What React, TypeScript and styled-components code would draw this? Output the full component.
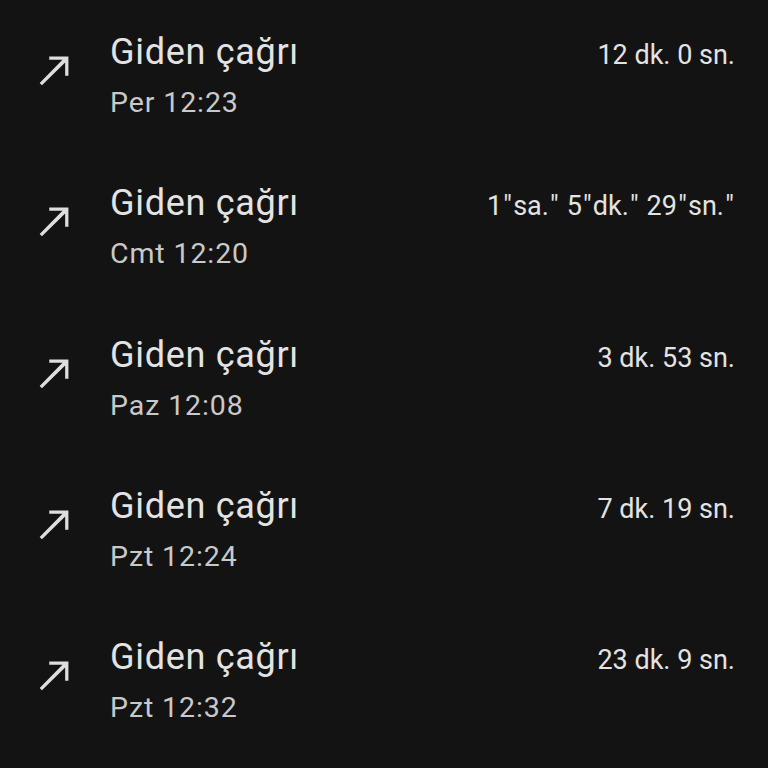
import React from "react";
import styled, { createGlobalStyle } from "styled-components";

const Global = createGlobalStyle`
  html, body { margin: 0; padding: 0; background: #131313; }
  body { font-family: Roboto, "Noto Sans", Arial, sans-serif; }
`;

const List = styled.div`
  width: 768px;
  height: 768px;
  overflow: hidden;
  background: #131313;
  display: flex;
  flex-direction: column;
`;

const Row = styled.div`
  height: 151.25px;
  flex: none;
  display: flex;
  align-items: flex-start;
  box-sizing: border-box;
  padding: 30px 33px 0 0;
`;

const IconCell = styled.div`
  width: 110px;
  flex: none;
  display: flex;
  padding: 17px 0 0 32px;
  box-sizing: border-box;
  svg { display: block; }
`;

const Main = styled.div`
  flex: 1;
  display: flex;
  flex-direction: column;
  min-width: 0;
`;

const TitleLine = styled.div`
  display: flex;
  justify-content: space-between;
  align-items: baseline;
  height: 44px;
`;

const Title = styled.span`
  font-size: 36px;
  line-height: 44px;
  color: #e3e3e3;
  letter-spacing: 0.7px;
`;

const Duration = styled.span`
  font-size: 27px;
  line-height: 44px;
  color: #e3e3e3;
`;

const Quote = styled.span`
  margin: 0 1.2px;
`;

const Sub = styled.div`
  margin-top: 9px;
  font-size: 28.5px;
  line-height: 40px;
  color: #c9c9c9;
  letter-spacing: 0.9px;
`;

const Arrow = () => (
  <svg width="46" height="46" viewBox="0 0 24 24" fill="#dedede">
    <path d="M9 5v1.7h6.9L4 18.8 5.2 20 17.3 8.1V15H19V5z" />
  </svg>
);

const renderDuration = (s: string) =>
  s.split('"').map((part, i, arr) => (
    <React.Fragment key={i}>
      {part}
      {i < arr.length - 1 && <Quote>"</Quote>}
    </React.Fragment>
  ));

const calls = [
  { day: "Per 12:23", dur: "12 dk. 0 sn." },
  { day: "Cmt 12:20", dur: '1"sa." 5"dk." 29"sn."' },
  { day: "Paz 12:08", dur: "3 dk. 53 sn." },
  { day: "Pzt 12:24", dur: "7 dk. 19 sn." },
  { day: "Pzt 12:32", dur: "23 dk. 9 sn." },
];

export default function App() {
  return (
    <>
      <Global />
      <List>
        {calls.map((c, i) => (
          <Row key={i}>
            <IconCell>
              <Arrow />
            </IconCell>
            <Main>
              <TitleLine>
                <Title>Giden çağrı</Title>
                <Duration>{renderDuration(c.dur)}</Duration>
              </TitleLine>
              <Sub>{c.day}</Sub>
            </Main>
          </Row>
        ))}
      </List>
    </>
  );
}
